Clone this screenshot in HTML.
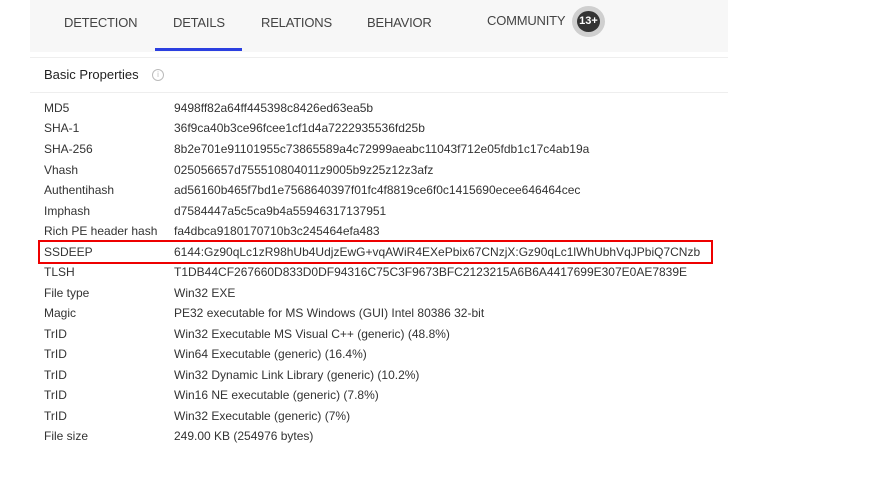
<!DOCTYPE html>
<html><head><style>
body{margin:0;width:875px;height:492px;background:#fff;font-family:"Liberation Sans",sans-serif;position:relative;overflow:hidden;color:#333}
.hdr{position:absolute;left:30px;top:0;width:698px;height:52px;background:#f7f7f7}
.tab{position:absolute;top:15px;font-size:13px;color:#444;letter-spacing:-0.2px}
.ul{position:absolute;left:155px;top:48px;width:87px;height:3px;background:#2b3fe0}
.badge{position:absolute;left:572px;top:6px;width:33px;height:31px;border-radius:50%;background:#cfcfcf}
.badge div{position:absolute;left:5px;top:5px;width:23px;height:21px;border-radius:50%;background:#333;color:#fff;font-size:11px;font-weight:bold;text-align:center;line-height:21px}
.line{position:absolute;left:30px;width:698px;height:1px;background:#eee}
.bp{position:absolute;left:44px;top:67px;font-size:13px;color:#222}
.info{position:absolute;left:152px;top:69px;width:10px;height:10px;border:1px solid #bbb;border-radius:50%;font-size:8px;color:#bbb;text-align:center;line-height:10px}
.r{position:absolute;font-size:12px;color:#333;white-space:nowrap}
.l{left:44px}.v{left:174px}
.box{position:absolute;left:38px;top:240px;width:671px;height:20px;border:2px solid #e00;}
</style></head><body>
<div class="hdr"></div>
<div class="tab" style="left:64px">DETECTION</div>
<div class="tab" style="left:173px">DETAILS</div>
<div class="tab" style="left:261px">RELATIONS</div>
<div class="tab" style="left:367px">BEHAVIOR</div>
<div class="tab" style="left:487px;top:13px">COMMUNITY</div>
<div class="badge"><div>13+</div></div>
<div class="ul"></div>
<div class="line" style="top:57px"></div>
<div class="bp">Basic Properties</div><div class="info">i</div>
<div class="line" style="top:92px"></div>
<div class="box"></div>
<div class="r l" style="top:101px">MD5</div><div class="r v" style="top:101px">9498ff82a64ff445398c8426ed63ea5b</div>
<div class="r l" style="top:121px">SHA-1</div><div class="r v" style="top:121px">36f9ca40b3ce96fcee1cf1d4a7222935536fd25b</div>
<div class="r l" style="top:142px">SHA-256</div><div class="r v" style="top:142px">8b2e701e91101955c73865589a4c72999aeabc11043f712e05fdb1c17c4ab19a</div>
<div class="r l" style="top:163px">Vhash</div><div class="r v" style="top:163px">025056657d755510804011z9005b9z25z12z3afz</div>
<div class="r l" style="top:183px">Authentihash</div><div class="r v" style="top:183px">ad56160b465f7bd1e7568640397f01fc4f8819ce6f0c1415690ecee646464cec</div>
<div class="r l" style="top:204px">Imphash</div><div class="r v" style="top:204px">d7584447a5c5ca9b4a55946317137951</div>
<div class="r l" style="top:224px">Rich PE header hash</div><div class="r v" style="top:224px">fa4dbca9180170710b3c245464efa483</div>
<div class="r l" style="top:245px">SSDEEP</div><div class="r v" style="top:245px">6144:Gz90qLc1zR98hUb4UdjzEwG+vqAWiR4EXePbix67CNzjX:Gz90qLc1lWhUbhVqJPbiQ7CNzb</div>
<div class="r l" style="top:265px">TLSH</div><div class="r v" style="top:265px">T1DB44CF267660D833D0DF94316C75C3F9673BFC2123215A6B6A4417699E307E0AE7839E</div>
<div class="r l" style="top:286px">File type</div><div class="r v" style="top:286px">Win32 EXE</div>
<div class="r l" style="top:306px">Magic</div><div class="r v" style="top:306px">PE32 executable for MS Windows (GUI) Intel 80386 32-bit</div>
<div class="r l" style="top:327px">TrID</div><div class="r v" style="top:327px">Win32 Executable MS Visual C++ (generic) (48.8%)</div>
<div class="r l" style="top:347px">TrID</div><div class="r v" style="top:347px">Win64 Executable (generic) (16.4%)</div>
<div class="r l" style="top:368px">TrID</div><div class="r v" style="top:368px">Win32 Dynamic Link Library (generic) (10.2%)</div>
<div class="r l" style="top:388px">TrID</div><div class="r v" style="top:388px">Win16 NE executable (generic) (7.8%)</div>
<div class="r l" style="top:409px">TrID</div><div class="r v" style="top:409px">Win32 Executable (generic) (7%)</div>
<div class="r l" style="top:429px">File size</div><div class="r v" style="top:429px">249.00 KB (254976 bytes)</div>
</body></html>
